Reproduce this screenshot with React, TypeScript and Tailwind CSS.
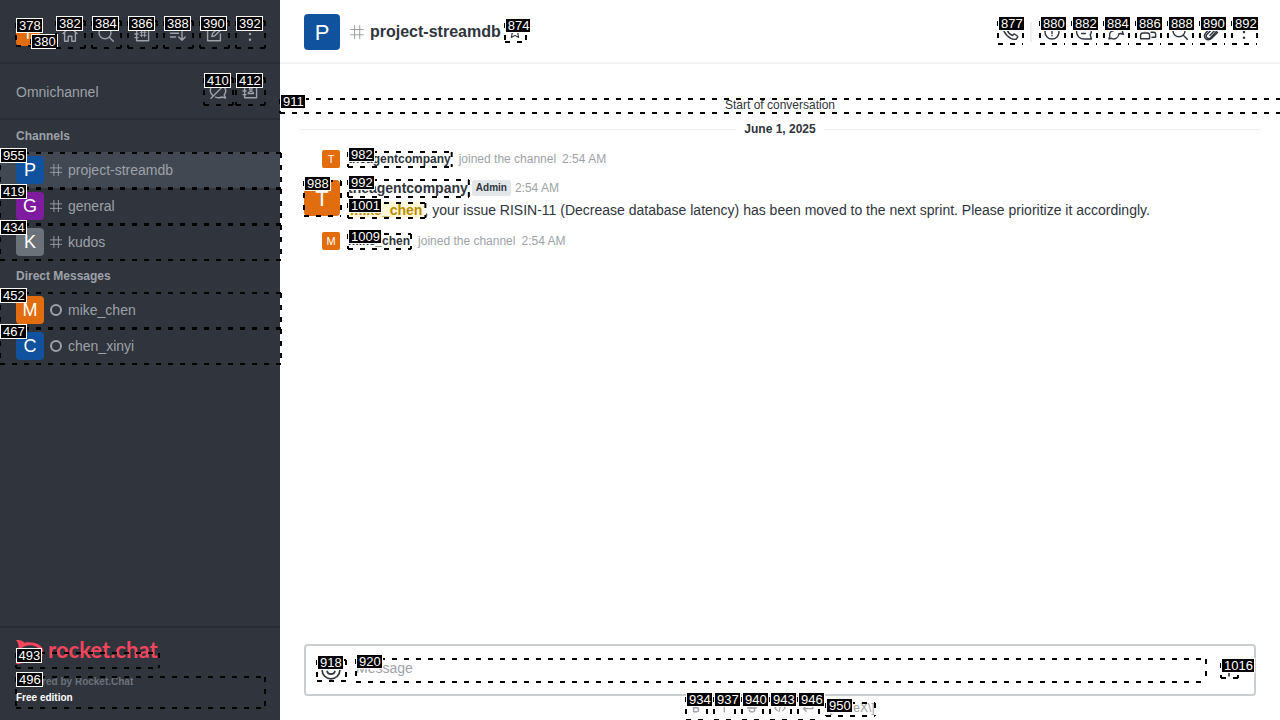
import type { ReactNode } from "react";

function Mark({ id }: { id: number }) {
  return (
    <span aria-hidden="true" className="pointer-events-none font-normal">
      <svg
        className="absolute top-px left-0 h-[calc(100%-1px)] w-[calc(100%+1px)] overflow-visible"
        stroke="black"
        strokeWidth="2"
        strokeDasharray="5 7"
      >
        <line x1="0" y1="0" x2="100%" y2="0" />
        <line x1="0" y1="100%" x2="100%" y2="100%" />
        <line x1="0" y1="0" x2="0" y2="100%" />
        <line x1="100%" y1="0" x2="100%" y2="100%" />
      </svg>
      <span className="absolute -top-1 left-0 flex h-[15px] items-center border border-white bg-black pr-px pl-0.5 font-['Liberation_Sans',Arial,sans-serif] text-[13px] leading-none text-white">
        {id}
      </span>
    </span>
  );
}

function Svg({ children, size = "size-5" }: { children: ReactNode; size?: string }) {
  return (
    <svg
      aria-hidden="true"
      viewBox="0 0 20 20"
      className={`${size} shrink-0`}
      fill="none"
      stroke="currentColor"
      strokeWidth="1.4"
      strokeLinecap="round"
      strokeLinejoin="round"
    >
      {children}
    </svg>
  );
}

const icons: Record<string, ReactNode> = {
  home: <path d="M3 9.5 10 3.2l7 6.3M4.6 8.6v8.6h3.6v-5h3.6v5h3.6V8.6" />,
  search: (
    <>
      <circle cx="9" cy="8.8" r="6" />
      <path d="m13.3 13.2 4 4" />
    </>
  ),
  directory: (
    <>
      <path d="M4.6 3.2h12v13.6h-12zM3 6.4h3M3 10h3M3 13.6h3" />
      <path d="M9.6 6.6v6M12.6 6.6v6M8.2 8.2h6M8.2 11.2h6" strokeWidth="1.1" />
    </>
  ),
  sort: <path d="M2.5 5.5h8M2.5 9.3h8M2.5 13h5M14 3.5v12.7M10.8 13l3.2 3.2 3.2-3.2" />,
  edit: (
    <>
      <path d="M11 4.2H3.6v12.6h12.8V10" />
      <path d="m7.8 12.6.7-3L15.6 2.6l2.2 2.2-7 7zM14 4.2l2.2 2.2" />
    </>
  ),
  kebab: (
    <g fill="currentColor" stroke="none">
      <circle cx="10" cy="4.3" r="1.25" />
      <circle cx="10" cy="10" r="1.25" />
      <circle cx="10" cy="15.7" r="1.25" />
    </g>
  ),
  chatOff: (
    <>
      <path d="M5 14.7A7 6.7 0 0 1 14 4M16 5.8a7 6.7 0 0 1 .2 8.2l1.3 3-3.6-1a8 8 0 0 1-6.4.2" />
      <path d="M3 17.2 17.5 2.8" />
    </>
  ),
  contact: (
    <>
      <path d="M4.6 3.2h12v13.6h-12zM3 6.4h3M3 10h3M3 13.6h3" />
      <circle cx="10.8" cy="8" r="1.3" />
      <path d="M8.2 12.6c0-2.6 5.2-2.6 5.2 0z" />
    </>
  ),
  hash: <path d="M7 2v16M13.4 2v16M2 7h16M2 13.4h16" strokeWidth="1.3" />,
  star: <path d="m10 2.7 2.2 4.8 5.1.6-3.8 3.5 1 5.2-4.5-2.6-4.5 2.6 1-5.2-3.8-3.5 5.1-.6z" />,
  phone: (
    <path d="M5.2 2.8 3.4 4.6c-.6 3 1 6.4 3.6 9s6 4.2 9 3.6l1.5-1.8c.4-.5.3-1-.2-1.4l-2.5-1.8c-.5-.3-1-.2-1.3.2l-.9 1.1c-2-.7-4.6-3.2-5.3-5.3l1.2-.9c.4-.3.5-.8.2-1.3L6.7 3c-.4-.5-1-.6-1.5-.2z" />
  ),
  info: (
    <>
      <circle cx="10" cy="10" r="7" />
      <path d="M10 6.5v5M10 13.5v.3" />
    </>
  ),
  threads: (
    <>
      <path d="M10 3a7 6.6 0 0 0 0 14h7.4l-1.2-4A7 6.6 0 0 0 10 3z" />
      <path d="M7.5 8.2h5M7.5 11.5h4" />
    </>
  ),
  discussion: (
    <>
      <path d="M12.5 12c.8 0 1.6-.2 2.2-.5l2.7.7-1-2.3A5.3 5.3 0 1 0 7 8.5" />
      <path d="M8 8.5a4.5 4.5 0 0 0-4.2 6l-.9 2.4 2.7-.6a4.7 4.7 0 0 0 7-3.3" />
    </>
  ),
  team: (
    <>
      <circle cx="7" cy="6" r="2.5" />
      <path d="M2.6 16.7v-3.5c0-1.4.8-2.2 2.2-2.2h4.6c1.4 0 2.2.8 2.2 2.2v3.5z" />
      <path d="M12.5 4a2 2 0 1 1 0 4M13 10.3h2.6c1.3 0 2 .7 2 2v3H14" />
    </>
  ),
  clip: (
    <path d="m8 13.2 5.2-5.3c1.5-1.6-.5-3.5-2-2L5.3 12c-2.7 2.8.7 6 3.4 3.4l6.6-6.8c3.6-3.8-1.2-8.2-4.7-4.7L4.3 10.3c-4.6 4.7 1 10.4 5.7 5.7l5.5-5.6" />
  ),
  emoji: (
    <>
      <circle cx="10" cy="10" r="7.4" />
      <path d="M6.8 11.2c.8 3 5.6 3 6.4 0M7.5 7.3v.3M12.5 7.3v.3" />
    </>
  ),
  plus: <path d="M10 2.5v15M2.5 10h15" strokeWidth="2" />,
  bold: <path d="M6 3.5h4.5a3 3 0 0 1 0 6.2H6zM6 9.7h5a3.3 3.3 0 0 1 0 6.6H6z" strokeWidth="2.4" />,
  italic: <path d="M10.5 3.5v13" strokeWidth="2.2" />,
  strike: (
    <path d="M14.5 6c-.5-3.5-8.7-3.5-8.7.4 0 4 9 2.6 9 6.8 0 4.6-9.3 4.3-9.6 0M2.5 10h15" strokeWidth="2.2" />
  ),
  code: <path d="m5.5 5.5-4 4.5 4 4.5M14.5 5.5l4 4.5-4 4.5M11.8 4 8.2 16" strokeWidth="2" />,
  multiline: <path d="M18 4v7H3M7 6.5 2.5 11 7 15.5" strokeWidth="2.2" />,
};

function IconButton({ id, icon, label, size = "size-6" }: { id: number; icon: string; label: string; size?: string }) {
  return (
    <button type="button" aria-label={label} className={`relative flex shrink-0 items-center justify-center ${size}`}>
      <Svg>{icons[icon]}</Svg>
      <Mark id={id} />
    </button>
  );
}

const sidebarTools = [
  { id: 382, icon: "home", label: "Home" },
  { id: 384, icon: "search", label: "Search" },
  { id: 386, icon: "directory", label: "Directory" },
  { id: 388, icon: "sort", label: "Display" },
  { id: 390, icon: "edit", label: "Create new" },
  { id: 392, icon: "kebab", label: "Administration" },
];

const channels = [
  { id: 955, name: "project-streamdb", letter: "P", color: "bg-[#10529e]", active: true },
  { id: 419, name: "general", letter: "G", color: "bg-[#7f1b9f]", active: false },
  { id: 434, name: "kudos", letter: "K", color: "bg-[#6c727a]", active: false },
];

const directs = [
  { id: 452, name: "mike_chen", letter: "M", color: "bg-[#e26d0e]", active: false },
  { id: 467, name: "chen_xinyi", letter: "C", color: "bg-[#10529e]", active: false },
];

const roomTools = [
  { id: 880, icon: "info", label: "Room information" },
  { id: 882, icon: "threads", label: "Threads" },
  { id: 884, icon: "discussion", label: "Discussion" },
  { id: 886, icon: "team", label: "Members" },
  { id: 888, icon: "search", label: "Search messages" },
  { id: 890, icon: "clip", label: "Files" },
  { id: 892, icon: "kebab", label: "Options" },
];

const formatTools = [
  { id: 934, icon: "bold", label: "Bold" },
  { id: 937, icon: "italic", label: "Italic" },
  { id: 940, icon: "strike", label: "Strike" },
  { id: 943, icon: "code", label: "Inline code" },
  { id: 946, icon: "multiline", label: "Multi-line" },
];

type Room = (typeof channels)[number];

function RoomLink({ room, direct }: { room: Room; direct?: boolean }) {
  return (
    <a href="#" className={`relative flex h-9 items-center pl-4 text-sm ${room.active ? "bg-[#414852]" : ""}`}>
      <span className={`flex size-7 items-center justify-center rounded-sm text-lg text-white ${room.color}`}>{room.letter}</span>
      <span className="flex w-6 justify-center">
        {direct ? (
          <span className="size-3 rounded-full border-2 border-[#9ea2a8]" />
        ) : (
          <Svg size="size-[14px]">{icons.hash}</Svg>
        )}
      </span>
      {room.name}
      <Mark id={room.id} />
    </a>
  );
}

function SystemMessage({ id, name, letter }: { id: number; name: string; letter: string }) {
  return (
    <div className="mt-3 flex h-[18px] items-center pl-[42px] text-xs text-[#9ea2a8]">
      <span className="mr-2 flex size-[18px] items-center justify-center rounded-xs bg-[#e26d0e] text-[11px] text-white">{letter}</span>
      <button type="button" className="relative h-4 font-bold leading-4 text-[#2f343d]">
        {name}
        <Mark id={id} />
      </button>
      <span className="ml-2">joined the channel</span>
      <span className="ml-1.5">2:54 AM</span>
    </div>
  );
}

export default function App() {
  return (
    <div className="flex h-screen overflow-hidden bg-white font-['Liberation_Sans',Arial,sans-serif] text-[#2f343d]">
      <aside className="relative flex w-[280px] shrink-0 flex-col bg-[#2f343d] text-[#9ea2a8]">
        <div className="flex h-16 items-start gap-2 border-b-2 border-[#282c34] px-4 pt-5">
          <button type="button" aria-label="User menu" className="relative mt-0.5 mr-2 flex size-6 items-center justify-center rounded-sm bg-[#e26d0e] text-white">
            T
            <Mark id={378} />
            <span className="absolute top-4 left-[15px] size-2">
              <Mark id={380} />
            </span>
          </button>
          {sidebarTools.map((tool) => (
            <IconButton key={tool.id} {...tool} size="size-7" />
          ))}
        </div>
        <div className="flex h-14 items-center border-b-2 border-[#282c34] px-4">
          <span className="flex-1 pt-0.5 text-sm leading-6">Omnichannel</span>
          <div className="flex gap-1">
            <IconButton id={410} icon="chatOff" label="Turn on answer chats" size="size-7" />
            <IconButton id={412} icon="contact" label="Contact center" size="size-7" />
          </div>
        </div>
        <nav className="flex-1">
          <h2 className="h-8 pl-4 text-xs leading-8 font-bold">Channels</h2>
          {channels.map((room) => (
            <RoomLink key={room.id} room={room} />
          ))}
          <h2 className="h-8 pl-4 text-xs leading-8 font-bold">Direct Messages</h2>
          {directs.map((room) => (
            <RoomLink key={room.id} room={room} direct />
          ))}
        </nav>
        <footer className="border-t-2 border-[#282c34] px-4 pt-3 pb-3">
          <a href="#" className="flex h-6 w-[142px] items-center text-[#f5455c]">
            <svg aria-hidden="true" viewBox="0 0 28 24" className="h-6 w-7 shrink-0" fill="currentColor">
              <path
                fillRule="evenodd"
                d="M0 .3C3.200-.5 6.500.5 8.500 2.700c8-1.500 18.800 1.200 18.800 9.300S16.500 22.800 8.500 21.300C6.500 23.500 3.200 24.500 0 23.700 2 21.500 3 19 2.500 16.500c-2-2.700-2-6.300 0-9C3 5 2 2.500 0 .3ZM14 5.200c-6 0-10 3-10 6.800s4 6.800 10 6.800 10-3 10-6.800-4-6.800-10-6.800Z"
              />
              <circle cx="9.5" cy="12" r="1.5" />
              <circle cx="14" cy="12" r="1.5" />
              <circle cx="18.5" cy="12" r="1.5" />
            </svg>
            <span className="ml-1 pb-1 font-[Lato,sans-serif] text-[22px] leading-6 font-bold">rocket.chat</span>
            <span className="relative mt-4 -ml-[142px] h-4 w-[142px] shrink-0">
              <Mark id={493} />
            </span>
          </a>
          <div className="relative mt-3 h-8 text-[10px] leading-4 font-bold text-[#6c727a]">
            <p className="h-3 leading-3">Powered by Rocket.Chat</p>
            <p className="mt-0.5 text-white">Free edition</p>
            <Mark id={496} />
          </div>
        </footer>
      </aside>

      <main className="flex min-w-0 flex-1 flex-col">
        <header className="flex h-16 shrink-0 items-center border-b-2 border-[#f2f3f5] px-6 pt-0.5">
          <span className="flex size-9 items-center justify-center rounded-sm bg-[#10529e] text-[22px] text-white">P</span>
          <span className="ml-2 flex w-[18px] justify-center text-[#9ea2a8]">
            <Svg size="size-4">{icons.hash}</Svg>
          </span>
          <h1 className="ml-1 text-base font-bold">project-streamdb</h1>
          <button type="button" aria-label="Favorite" className="relative ml-1 flex size-5 items-center justify-center">
            <Svg size="size-4">{icons.star}</Svg>
            <Mark id={874} />
          </button>
          <div className="ml-auto flex items-center gap-2">
            <IconButton id={877} icon="phone" label="Call" />
            <span className="h-5 w-0.5 bg-[#eeeff1]" />
            {roomTools.map((tool) => (
              <IconButton key={tool.id} {...tool} />
            ))}
          </div>
        </header>

        <section className="flex-1 pt-[34px]">
          <div className="relative h-[15px] text-center text-xs leading-[14px]">
            Start of conversation
            <Mark id={911} />
          </div>
          <div className="mx-5 mt-2 flex h-[17px] items-center gap-2 pb-px text-xs font-bold">
            <span className="h-px flex-1 bg-[#eeeff1]" />
            June 1, 2025
            <span className="h-px flex-1 bg-[#eeeff1]" />
          </div>
          <SystemMessage id={982} name="theagentcompany" letter="T" />
          <article className="mt-3 flex gap-2 pl-6">
            <span className="relative flex size-9 shrink-0 items-center justify-center rounded-sm bg-[#e26d0e] text-[22px] text-white">
              T
              <Mark id={988} />
            </span>
            <div>
              <div className="flex h-4 items-center gap-1">
                <button type="button" className="relative h-[18px] text-sm leading-[18px] font-bold">
                  theagentcompany
                  <Mark id={992} />
                </button>
                <span className="h-4 rounded-xs bg-[#e4e7ea] px-1 text-[10px] leading-4 font-bold">Admin</span>
                <span className="text-xs text-[#9ea2a8]">2:54 AM</span>
              </div>
              <p className="mt-1 text-sm leading-5">
                <button type="button" className="relative h-4 rounded-sm bg-[#fff6d6] px-0.5 leading-4 font-bold text-[#b88d00]">
                  mike_chen
                  <Mark id={1001} />
                </button>
                , your issue RISIN-11 (Decrease database latency) has been moved to the next sprint. Please prioritize it accordingly.
              </p>
            </div>
          </article>
          <SystemMessage id={1009} name="mike_chen" letter="M" />
        </section>

        <div className="mx-6 flex h-[52px] shrink-0 items-center rounded-sm border-2 border-[#cbced1] pr-[17px] pl-[11px]">
          <button type="button" aria-label="Emoji" className="relative flex h-[22px] w-7 items-center justify-center">
            <Svg size="size-6">{icons.emoji}</Svg>
            <Mark id={918} />
          </button>
          <div className="relative mr-4 ml-[11px] flex h-6 flex-1 items-center">
            <input aria-label="Message" placeholder="Message" className="w-full bg-transparent pb-1 text-sm outline-none placeholder:text-[#9ea2a8]" />
            <Mark id={920} />
          </div>
          <button type="button" aria-label="More actions" className="relative flex h-4 w-4 items-center justify-center">
            <Svg size="size-4">{icons.plus}</Svg>
            <Mark id={1016} />
          </button>
        </div>
        <div className="flex h-6 shrink-0 items-start justify-center gap-2 text-[#9ea2a8]">
          {formatTools.map((tool) => (
            <button key={tool.id} type="button" aria-label={tool.label} className="relative flex h-6 w-5 items-center justify-center">
              <Svg size="size-3">{icons[tool.icon]}</Svg>
              <Mark id={tool.id} />
            </button>
          ))}
          <a href="#" className="relative mt-1.5 h-[14px] w-12 text-right text-xs leading-3 whitespace-nowrap">
            {"\\[KaTeX\\]"}
            <Mark id={950} />
          </a>
        </div>
      </main>
    </div>
  );
}
